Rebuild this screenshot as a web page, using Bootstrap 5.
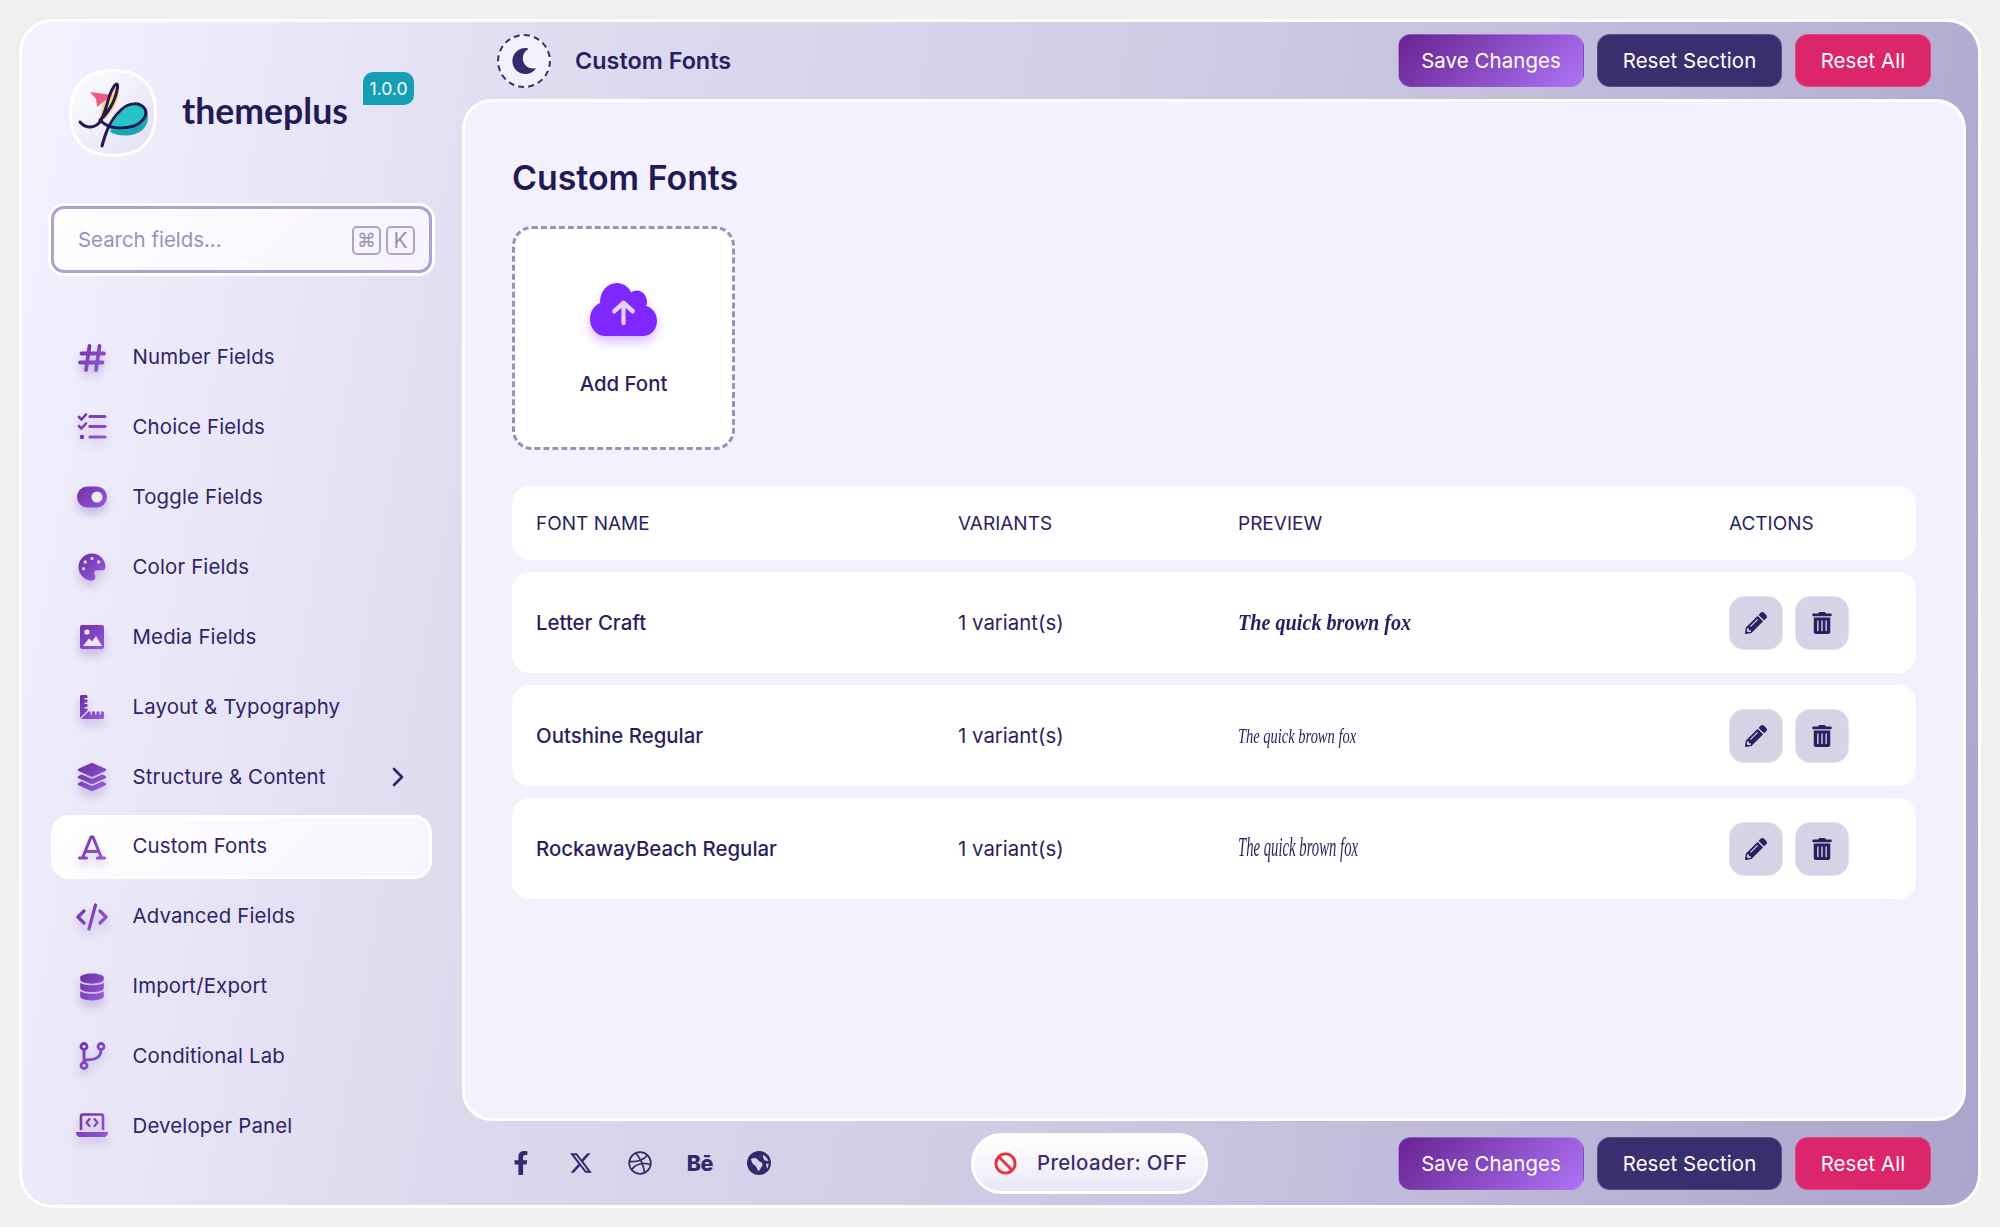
<!DOCTYPE html>
<html lang="en">
<head>
<meta charset="utf-8">
<title>themeplus - Custom Fonts</title>
<link href="https://cdn.jsdelivr.net/npm/bootstrap@5.3.0/dist/css/bootstrap.min.css" rel="stylesheet">
<style>
html,body{height:100%;}
body{background:#f0f0f0;font-family:Inter,"Liberation Sans",sans-serif;color:#2a1f5e;padding:19px;font-size:20.4px;overflow:hidden;}
.shell{width:1962px;height:1189px;border:3px solid #fff;border-radius:34px;background:linear-gradient(100deg,#f4f2ff 0%,#dfdcf0 25%,#cfcbe4 55%,#aba4cd 100%);overflow:hidden;}
.sidebar{width:440px;flex:none;}
.brand{padding:47px 0 0 47px;height:181px;}
.logo-box{width:88px;height:88px;flex:none;}
.brand-name{font-family:Lato,sans-serif;font-weight:700;font-size:35.6px;color:#231a56;margin-left:25px;line-height:83px;height:88px;}
.version{background:#159fb5;color:#fff;font-size:17.5px;line-height:33px;height:33px;width:51px;text-align:center;border-radius:10px 10px 10px 0;margin:3px 48px 0 auto;}
.search-outer{margin-left:26px;width:387px;height:73px;border-radius:16px;border:3px solid #fff;}
.search-inner{height:100%;border:3px solid #aba4cd;border-radius:13px;background:linear-gradient(135deg,#fff,#f5f3fe);padding:2px 14px 0 24px;}
.search-input{border:0;background:transparent;outline:0;flex:1;min-width:0;font-size:20.4px;color:#2a1f5e;font-family:Inter,sans-serif;padding:0;}
.search-input::placeholder{color:#9a90c0;opacity:1;}
.keycap{width:29px;height:29px;border:2px solid #aba4cd;border-radius:5px;color:#9a90c0;font-size:21px;line-height:1;margin-left:5px;}
.keycap-sym{font-family:"DejaVu Sans",sans-serif;font-size:19px;}
.side-nav{margin:49.5px 0 0 29px;width:381px;}
.nav-row{height:64px;margin-bottom:5.9px;padding-left:25px;padding-right:25px;border-radius:18px;border:3px solid transparent;color:#2f2468;text-decoration:none;font-weight:400;letter-spacing:.16px;}
.nav-row.is-on{background:linear-gradient(135deg,#fff,#f6f4fe);border-color:#fff;}
.nav-ic{width:32px;height:32px;margin-left:-3.5px;margin-right:25px;flex:none;filter:drop-shadow(0 6px 5px rgba(90,50,160,.28));}
.nav-ic svg{display:block;width:100%;height:100%;overflow:visible;}
.main-col{flex:1;min-width:0;padding-right:12px;}
.topbar{height:77px;padding:0 35px 0 35px;}
.moon-btn{width:54px;height:54px;border:2px dashed #3b2e6e;border-radius:50%;background:#f3f1fe;flex:none;}
.topbar-title{font-size:23.4px;font-weight:600;color:#2a1f5e;margin-left:24px;}
.act-btn{height:53px;border-radius:13px;border:1px solid rgba(255,255,255,.15);color:#fff;font-size:20.4px;font-weight:400;padding:2px 0 0;display:flex;align-items:center;justify-content:center;font-family:Inter,sans-serif;letter-spacing:.1px;}
.act-btn:hover{color:#fff;}
.act-save{width:186px;background:linear-gradient(135deg,#66228f,#ae74f6);}
.act-section{width:185px;background:#3a2e6e;}
.act-all{width:136px;background:#dc266c;}
.btn-set{gap:13px;margin-left:auto;}
.panel{height:1022px;border:3px solid #fff;border-radius:30px;background:#f3f1fe;padding:48px 47px;}
.panel-title{font-size:33.9px;font-weight:600;color:#221a55;margin:0 0 30px;line-height:46px;padding-top:5px;height:46px;}
.add-box{width:223px;height:224px;border:3px dashed #9a90c0;border-radius:20px;background:#fff;margin-bottom:36px;padding-top:54px;}
.add-box svg{width:67px;height:53px;margin-bottom:37.5px;filter:drop-shadow(0 6px 6px rgba(127,39,255,.3));}
.add-label{font-size:20.4px;font-weight:500;color:#2a1f5e;line-height:20px;}
.font-table{width:1404px;border-collapse:separate;border-spacing:0;table-layout:fixed;color:#2a1f5e;}
.font-table td,.font-table th{background:#fff;padding:0 0 0 24px;vertical-align:middle;}
.font-table th,.font-table td:not(:last-child){padding-top:2px;}
.font-table td:first-child,.font-table th:first-child{border-radius:18px 0 0 18px;}
.font-table td:last-child,.font-table th:last-child{border-radius:0 18px 18px 0;}
.font-table th{height:74px;font-weight:400;font-size:19px;}
.font-table td{height:101px;}
.gap-row td{height:12px!important;background:transparent!important;padding:0!important;border-radius:0!important;}
.name-cell{font-weight:500;}
.tool-btn{width:54px;height:54px;background:#d5d3e6;border:1px solid #e3e1ef;border-radius:15px;padding:0;color:#2a1f5e;}
.tool-btn svg{width:22px;height:22px;fill:#2a1f5e;}
.tool-gap{gap:11.5px;}
.pv{display:inline-block;transform-origin:left center;white-space:nowrap;font-family:"Liberation Serif",serif;font-style:italic;color:#2a1f5e;line-height:1;}
.pv-a{font-weight:700;font-size:23px;transform:scaleX(.877);}
.pv-b{font-size:22px;transform:scaleX(.658);font-weight:400;}
.pv-c{font-size:27px;transform:scaleX(.545);}
.botbar{height:84px;padding:0 35px 0 47px;}
.social{gap:35.6px;}
.soc-ic{width:24px;height:24px;color:#35296b;}
.soc-ic svg{display:block;width:100%;height:100%;}
.soc-be{font-weight:800;font-size:21.5px;line-height:24px;text-align:center;width:29px;margin:0 -2.5px;letter-spacing:-.5px;font-family:Inter,sans-serif;}
.preload{margin-left:auto;margin-right:190px;width:237px;height:61px;border:3px solid #fff;border-radius:31px;background:linear-gradient(180deg,#fff,#ebe8f8);padding-left:20px;color:#3b2e6e;}
.preload svg{width:23px;height:23px;margin-right:20px;flex:none;}
.preload span{letter-spacing:.35px;font-weight:500;}
.botbar .btn-set{margin-left:0;}
</style>
</head>
<body>
<svg width="0" height="0" style="position:absolute">
  <defs>
    <linearGradient id="gv" x1="0" y1="0" x2="1" y2="1"><stop offset="0" stop-color="#6b2ba0"/><stop offset="1" stop-color="#9a5fe0"/></linearGradient>
    <linearGradient id="gu" gradientUnits="userSpaceOnUse" x1="0" y1="0" x2="32" y2="32"><stop offset="0" stop-color="#6b2ba0"/><stop offset="1" stop-color="#9a5fe0"/></linearGradient>
    <linearGradient id="lg" x1="0" y1="0" x2="1" y2="1"><stop offset="0" stop-color="#ffffff"/><stop offset="1" stop-color="#e2ddf5"/></linearGradient>
  </defs>
</svg>
<div class="shell d-flex">
  <aside class="sidebar">
    <div class="brand d-flex align-items-start">
      <div class="logo-box">
        <svg viewBox="0 0 88 88" width="88" height="88">
          <path d="M44 1.5C72 1.5 86.5 16 86.5 44S72 86.5 44 86.5 1.5 72 1.5 44 16 1.5 44 1.5Z" fill="url(#lg)" stroke="#fff" stroke-width="3"/>
          <path d="M48 14C53 16 50 40 33 53C28 45 36 24 48 14Z" fill="#fbd67a"/>
          <path d="M21 23L43 26L28 38L27 30Z" fill="#ef5a86"/>
          <path d="M41 63C48 44 66 32 74 38C82 44 81 60 66 65C56 68 46 66 41 63Z" fill="#1aa5b3"/>
          <path d="M41 60C48 42 64 31 72 36C78 41 76 52 66 58C56 62 47 62 41 60Z" fill="#27c3c6"/>
          <path d="M11 53C16 59 24 60 30 54C38 44 38 28 44 19C47 14 50 13 48 21C46 33 38 45 32 50" fill="none" stroke="#211a55" stroke-width="3" stroke-linecap="round"/>
          <path d="M33 77C36 66 40 52 52 41C60 33 71 33 76 40C79 46 74 53 65 57C55 60 40 61 31 51" fill="none" stroke="#211a55" stroke-width="3" stroke-linecap="round"/>
        </svg>
      </div>
      <div class="brand-name">themeplus</div>
      <div class="version">1.0.0</div>
    </div>
    <div class="search-outer">
      <div class="search-inner d-flex align-items-center">
        <input class="search-input" type="text" placeholder="Search fields...">
        <span class="keycap keycap-sym d-flex align-items-center justify-content-center">⌘</span>
        <span class="keycap d-flex align-items-center justify-content-center">K</span>
      </div>
    </div>
    <nav class="side-nav">
      <a class="nav-row d-flex align-items-center" href="#"><span class="nav-ic"><svg viewBox="0 0 32 32"><path d="M13.5 4L10 28M23.5 4L20 28M5.5 11.5H28M4 20.5H26.5" fill="none" stroke="url(#gu)" stroke-width="3.8" stroke-linecap="round"/></svg></span>Number Fields</a>
      <a class="nav-row d-flex align-items-center" href="#"><span class="nav-ic"><svg viewBox="0 0 32 32"><path d="M3 6L5.5 8.5L10 3.5M3 15L5.5 17.5L10 12.5" fill="none" stroke="url(#gu)" stroke-width="2.6" stroke-linecap="round" stroke-linejoin="round"/><circle cx="6" cy="26" r="2.3" fill="#7b3bb8"/><path d="M14 5.5H29M14 15.5H29M14 26H29" fill="none" stroke="url(#gu)" stroke-width="3.2" stroke-linecap="round"/></svg></span>Choice Fields</a>
      <a class="nav-row d-flex align-items-center" href="#"><span class="nav-ic"><svg viewBox="0 0 32 32"><rect x="1" y="5.5" width="30" height="21" rx="10.5" fill="url(#gu)"/><circle cx="21" cy="16" r="5.5" fill="#f0edfb"/></svg></span>Toggle Fields</a>
      <a class="nav-row d-flex align-items-center" href="#"><span class="nav-ic"><svg viewBox="-48 -48 608 608"><path fill="url(#gv)" d="M512 256c0 .9 0 1.8 0 2.7c-.4 36.5-33.6 61.3-70.1 61.3H344c-26.5 0-48 21.5-48 48c0 3.4 .4 6.7 1 9.9c2.1 10.2 6.5 20 10.8 29.9c6.1 13.8 12.1 27.5 12.1 42c0 31.8-21.6 60.7-53.4 62c-3.5 .1-7 .2-10.6 .2C114.6 512 0 397.4 0 256S114.6 0 256 0S512 114.6 512 256zM128 288a32 32 0 1 0 -64 0 32 32 0 1 0 64 0zm0-96a32 32 0 1 0 0-64 32 32 0 1 0 0 64zM288 96a32 32 0 1 0 -64 0 32 32 0 1 0 64 0zm96 96a32 32 0 1 0 0-64 32 32 0 1 0 0 64z" fill-rule="evenodd"/></svg></span>Color Fields</a>
      <a class="nav-row d-flex align-items-center" href="#"><span class="nav-ic"><svg viewBox="0 0 32 32"><rect x="4" y="4" width="24" height="24" rx="2" fill="url(#gu)"/><circle cx="11" cy="11" r="2.6" fill="#ece8f8"/><path d="M7 25L13 17.5L16 20.5L20 15L26 25Z" fill="#ece8f8"/></svg></span>Media Fields</a>
      <a class="nav-row d-flex align-items-center" href="#"><span class="nav-ic"><svg viewBox="-85 -85 682 682"><path fill="url(#gv)" d="M160 288h-56c-4.42 0-8-3.58-8-8v-16c0-4.42 3.58-8 8-8h56v-64h-56c-4.42 0-8-3.58-8-8v-16c0-4.42 3.58-8 8-8h56V96h-56c-4.42 0-8-3.58-8-8V72c0-4.42 3.58-8 8-8h56V32c0-17.67-14.33-32-32-32H32C14.33 0 0 14.33 0 32v448c0 2.77.91 5.24 1.57 7.8L160 329.38V288zm320 64h-32v56c0 4.42-3.58 8-8 8h-16c-4.42 0-8-3.58-8-8v-56h-64v56c0 4.42-3.58 8-8 8h-16c-4.42 0-8-3.58-8-8v-56h-64v56c0 4.42-3.58 8-8 8h-16c-4.42 0-8-3.58-8-8v-56h-41.37L24.2 510.43c2.56.66 5.04 1.57 7.8 1.57h448c17.67 0 32-14.33 32-32v-96c0-17.67-14.33-32-32-32z"/></svg></span>Layout &amp; Typography</a>
      <a class="nav-row d-flex align-items-center" href="#"><span class="nav-ic"><svg viewBox="-32 -32 576 576"><path fill="url(#gv)" d="M12.41 148.02l232.94 105.67c6.8 3.09 14.49 3.09 21.29 0l232.94-105.67c16.55-7.51 16.55-32.52 0-40.03L266.65 2.31a25.607 25.607 0 0 0-21.29 0L12.41 107.98c-16.55 7.51-16.55 32.53 0 40.04zm487.18 88.28l-58.09-26.33-161.64 73.27c-7.56 3.43-15.59 5.17-23.86 5.17s-16.29-1.74-23.86-5.17L70.51 209.97l-58.1 26.33c-16.55 7.5-16.55 32.5 0 40l232.94 105.59c6.8 3.08 14.49 3.08 21.29 0L499.59 276.3c16.55-7.5 16.55-32.5 0-40zm0 127.8l-57.87-26.23-161.86 73.37c-7.56 3.43-15.59 5.17-23.86 5.17s-16.29-1.74-23.86-5.17L70.29 337.87 12.41 364.1c-16.55 7.5-16.55 32.5 0 40l232.94 105.59c6.8 3.08 14.49 3.08 21.29 0L499.59 404.1c16.55-7.5 16.55-32.5 0-40z"/></svg></span>Structure &amp; Content<svg class="ms-auto" width="12" height="20" viewBox="0 0 12 20"><path d="M2 2L10 10L2 18" fill="none" stroke="#2f2468" stroke-width="2.6" stroke-linecap="round" stroke-linejoin="round"/></svg></a>
      <a class="nav-row is-on d-flex align-items-center" href="#"><span class="nav-ic"><svg viewBox="0 0 32 32"><path d="M3.5 27H10.5M21.5 27H28.5M6.5 27L15 6H17L25.5 27M10 20.5H22" fill="none" stroke="url(#gu)" stroke-width="3" stroke-linecap="round" stroke-linejoin="round"/></svg></span>Custom Fonts</a>
      <a class="nav-row d-flex align-items-center" href="#"><span class="nav-ic"><svg viewBox="0 0 32 32"><path d="M8 10L2 16L8 22M24 10L30 16L24 22M19.5 4L13 28" fill="none" stroke="url(#gu)" stroke-width="3.2" stroke-linecap="round" stroke-linejoin="round"/></svg></span>Advanced Fields</a>
      <a class="nav-row d-flex align-items-center" href="#"><span class="nav-ic"><svg viewBox="-48 -48 544 608"><path fill="url(#gv)" d="M448 73.143v45.714C448 159.143 347.667 192 224 192S0 159.143 0 118.857V73.143C0 32.857 100.333 0 224 0s224 32.857 224 73.143zM448 176v102.857C448 319.143 347.667 352 224 352S0 319.143 0 278.857V176c48.125 33.143 136.208 48.572 224 48.572S399.874 209.143 448 176zm0 160v102.857C448 479.143 347.667 512 224 512S0 479.143 0 438.857V336c48.125 33.143 136.208 48.572 224 48.572S399.874 369.143 448 336z"/></svg></span>Import/Export</a>
      <a class="nav-row d-flex align-items-center" href="#"><span class="nav-ic"><svg viewBox="0 0 32 32"><g fill="none" stroke="url(#gu)" stroke-width="2.8" stroke-linecap="round"><circle cx="8" cy="6.5" r="3"/><circle cx="8" cy="25.5" r="3"/><circle cx="25" cy="6.5" r="3"/><path d="M8 9.5V22.5M8 20C18 20 25 19 25 9.5"/></g></svg></span>Conditional Lab</a>
      <a class="nav-row d-flex align-items-center" href="#"><span class="nav-ic"><svg viewBox="0 0 32 32"><path d="M5 20V6.5C5 5.5 5.8 4.5 7 4.5H25C26.2 4.5 27 5.5 27 6.5V20" fill="none" stroke="url(#gu)" stroke-width="2.6"/><path d="M13.5 9L10.5 12.5L13.5 16M18.5 9L21.5 12.5L18.5 16" fill="none" stroke="url(#gu)" stroke-width="2.2" stroke-linecap="round" stroke-linejoin="round"/><path d="M0 22H32C32 25.5 30 27 28 27H4C2 27 0 25.5 0 22Z" fill="url(#gu)"/></svg></span>Developer Panel</a>
    </nav>
  </aside>
  <div class="main-col d-flex flex-column">
    <header class="topbar d-flex align-items-center">
      <div class="moon-btn d-flex align-items-center justify-content-center"><svg width="26" height="26" viewBox="0 0 512 512"><path fill="#35296b" d="M283.211 512c78.962 0 151.079-35.925 198.857-94.792 7.068-8.708-.639-21.43-11.562-19.35-124.203 23.654-238.262-71.576-238.262-196.954 0-72.222 38.662-138.635 101.498-174.394 9.686-5.512 7.25-20.197-3.756-22.23A258.156 258.156 0 0 0 283.211 0c-141.309 0-256 114.511-256 256 0 141.309 114.511 256 256 256z"/></svg></div>
      <div class="topbar-title">Custom Fonts</div>
      <div class="btn-set d-flex">
        <button class="btn act-btn act-save" type="button">Save Changes</button>
        <button class="btn act-btn act-section" type="button">Reset Section</button>
        <button class="btn act-btn act-all" type="button">Reset All</button>
      </div>
    </header>
    <main class="panel">
      <h1 class="panel-title">Custom Fonts</h1>
      <div class="add-box d-flex flex-column align-items-center">
        <svg viewBox="0 32 640 448" preserveAspectRatio="none"><path fill="#7f27ff" d="M537.6 226.6c4.1-10.7 6.4-22.4 6.4-34.6 0-53-43-96-96-96-19.7 0-38.1 6-53.3 16.2C367 64.2 315.3 32 256 32c-88.4 0-160 71.6-160 160 0 2.7.1 5.4.2 8.1C40.2 219.8 0 273.2 0 336c0 79.5 64.5 144 144 144h368c70.7 0 128-57.3 128-128 0-61.9-44-113.6-102.4-125.4z"/><path d="M320 370V215M232 270L320 200L408 270" fill="none" stroke="#e5d2ff" stroke-width="40" stroke-linecap="round" stroke-linejoin="round"/></svg>
        <div class="add-label">Add Font</div>
      </div>
      <table class="font-table">
        <colgroup><col style="width:422px"><col style="width:280px"><col style="width:491px"><col style="width:211px"></colgroup>
        <thead><tr><th>FONT NAME</th><th>VARIANTS</th><th>PREVIEW</th><th>ACTIONS</th></tr></thead>
        <tbody>
          <tr class="gap-row"><td colspan="4"></td></tr>
          <tr><td class="name-cell">Letter Craft</td><td>1 variant(s)</td><td><span class="pv pv-a">The quick brown fox</span></td><td><div class="d-flex tool-gap">
            <button class="btn tool-btn d-flex align-items-center justify-content-center" type="button" aria-label="Edit"><svg viewBox="0 0 512 512"><path d="M497.9 142.1l-46.1 46.1c-4.7 4.7-12.3 4.7-17 0l-111-111c-4.7-4.7-4.7-12.3 0-17l46.1-46.1c18.7-18.7 49.1-18.7 67.9 0l60.1 60.1c18.8 18.7 18.8 49.1 0 67.9zM284.2 99.8L21.6 362.4.4 483.9c-2.9 16.4 11.4 30.6 27.8 27.8l121.5-21.3 262.6-262.6c4.7-4.7 4.7-12.3 0-17l-111-111c-4.8-4.7-12.4-4.7-17.1 0zM124.1 339.9c-5.5-5.5-5.5-14.3 0-19.8l154-154c5.5-5.5 14.3-5.5 19.8 0s5.5 14.3 0 19.8l-154 154c-5.5 5.5-14.3 5.5-19.8 0zM88 424h48v36.3l-64.5 11.3-31.1-31.1L51.7 376H88v48z"/></svg></button>
            <button class="btn tool-btn d-flex align-items-center justify-content-center" type="button" aria-label="Delete"><svg viewBox="0 0 448 512"><path d="M32 464a48 48 0 0 0 48 48h288a48 48 0 0 0 48-48V128H32zm272-256a16 16 0 0 1 32 0v224a16 16 0 0 1-32 0zm-96 0a16 16 0 0 1 32 0v224a16 16 0 0 1-32 0zm-96 0a16 16 0 0 1 32 0v224a16 16 0 0 1-32 0zM432 32H312l-9.4-18.7A24 24 0 0 0 281.1 0H166.8a23.72 23.72 0 0 0-21.4 13.3L136 32H16A16 16 0 0 0 0 48v32a16 16 0 0 0 16 16h416a16 16 0 0 0 16-16V48a16 16 0 0 0-16-16z"/></svg></button></div></td></tr>
          <tr class="gap-row"><td colspan="4"></td></tr>
          <tr><td class="name-cell">Outshine Regular</td><td>1 variant(s)</td><td><span class="pv pv-b">The quick brown fox</span></td><td><div class="d-flex tool-gap">
            <button class="btn tool-btn d-flex align-items-center justify-content-center" type="button" aria-label="Edit"><svg viewBox="0 0 512 512"><path d="M497.9 142.1l-46.1 46.1c-4.7 4.7-12.3 4.7-17 0l-111-111c-4.7-4.7-4.7-12.3 0-17l46.1-46.1c18.7-18.7 49.1-18.7 67.9 0l60.1 60.1c18.8 18.7 18.8 49.1 0 67.9zM284.2 99.8L21.6 362.4.4 483.9c-2.9 16.4 11.4 30.6 27.8 27.8l121.5-21.3 262.6-262.6c4.7-4.7 4.7-12.3 0-17l-111-111c-4.8-4.7-12.4-4.7-17.1 0zM124.1 339.9c-5.5-5.5-5.5-14.3 0-19.8l154-154c5.5-5.5 14.3-5.5 19.8 0s5.5 14.3 0 19.8l-154 154c-5.5 5.5-14.3 5.5-19.8 0zM88 424h48v36.3l-64.5 11.3-31.1-31.1L51.7 376H88v48z"/></svg></button>
            <button class="btn tool-btn d-flex align-items-center justify-content-center" type="button" aria-label="Delete"><svg viewBox="0 0 448 512"><path d="M32 464a48 48 0 0 0 48 48h288a48 48 0 0 0 48-48V128H32zm272-256a16 16 0 0 1 32 0v224a16 16 0 0 1-32 0zm-96 0a16 16 0 0 1 32 0v224a16 16 0 0 1-32 0zm-96 0a16 16 0 0 1 32 0v224a16 16 0 0 1-32 0zM432 32H312l-9.4-18.7A24 24 0 0 0 281.1 0H166.8a23.72 23.72 0 0 0-21.4 13.3L136 32H16A16 16 0 0 0 0 48v32a16 16 0 0 0 16 16h416a16 16 0 0 0 16-16V48a16 16 0 0 0-16-16z"/></svg></button></div></td></tr>
          <tr class="gap-row"><td colspan="4"></td></tr>
          <tr><td class="name-cell">RockawayBeach Regular</td><td>1 variant(s)</td><td><span class="pv pv-c">The quick brown fox</span></td><td><div class="d-flex tool-gap">
            <button class="btn tool-btn d-flex align-items-center justify-content-center" type="button" aria-label="Edit"><svg viewBox="0 0 512 512"><path d="M497.9 142.1l-46.1 46.1c-4.7 4.7-12.3 4.7-17 0l-111-111c-4.7-4.7-4.7-12.3 0-17l46.1-46.1c18.7-18.7 49.1-18.7 67.9 0l60.1 60.1c18.8 18.7 18.8 49.1 0 67.9zM284.2 99.8L21.6 362.4.4 483.9c-2.9 16.4 11.4 30.6 27.8 27.8l121.5-21.3 262.6-262.6c4.7-4.7 4.7-12.3 0-17l-111-111c-4.8-4.7-12.4-4.7-17.1 0zM124.1 339.9c-5.5-5.5-5.5-14.3 0-19.8l154-154c5.5-5.5 14.3-5.5 19.8 0s5.5 14.3 0 19.8l-154 154c-5.5 5.5-14.3 5.5-19.8 0zM88 424h48v36.3l-64.5 11.3-31.1-31.1L51.7 376H88v48z"/></svg></button>
            <button class="btn tool-btn d-flex align-items-center justify-content-center" type="button" aria-label="Delete"><svg viewBox="0 0 448 512"><path d="M32 464a48 48 0 0 0 48 48h288a48 48 0 0 0 48-48V128H32zm272-256a16 16 0 0 1 32 0v224a16 16 0 0 1-32 0zm-96 0a16 16 0 0 1 32 0v224a16 16 0 0 1-32 0zm-96 0a16 16 0 0 1 32 0v224a16 16 0 0 1-32 0zM432 32H312l-9.4-18.7A24 24 0 0 0 281.1 0H166.8a23.72 23.72 0 0 0-21.4 13.3L136 32H16A16 16 0 0 0 0 48v32a16 16 0 0 0 16 16h416a16 16 0 0 0 16-16V48a16 16 0 0 0-16-16z"/></svg></button></div></td></tr>
        </tbody>
      </table>
    </main>
    <footer class="botbar d-flex align-items-center">
      <div class="social d-flex align-items-center">
        <span class="soc-ic"><svg viewBox="0 0 320 512"><path fill="currentColor" d="M279.14 288l14.22-92.66h-88.91v-60.13c0-25.35 12.42-50.06 52.24-50.06h40.42V6.26S260.43 0 225.36 0c-73.22 0-121.08 44.38-121.08 124.72v70.62H22.89V288h81.39v224h100.17V288z"/></svg></span>
        <span class="soc-ic"><svg viewBox="0 0 512 512"><path fill="currentColor" d="M389.2 48h70.6L305.6 224.2 487.8 464H345.8L233 318.4 103.9 464H33.3l164.9-188.5L24 48h145.6l100.5 132.9L389.2 48zM364.4 421.8h39.1L151.1 88h-42L364.4 421.8z"/></svg></span>
        <span class="soc-ic"><svg viewBox="0 0 24 24"><g fill="none" stroke="currentColor" stroke-width="1.7"><circle cx="12" cy="12" r="10.8"/><path d="M8 2.2C12 7 15.5 14 16.6 21.8M1.6 10.5C8 11 15 9.5 19.5 4.2M3.5 19C7 13.5 14 11 22.8 13.5"/></g></svg></span>
        <span class="soc-ic soc-be">Bē</span>
        <span class="soc-ic"><svg viewBox="0 0 24 24"><circle cx="12" cy="12" r="12" fill="currentColor"/><path d="M4 8C7 6 10 7 11 9C12 11 14 10.5 15 12C16 14 15.5 15 14 16.5C13 19 11.5 20.5 11 20C10 17 9.5 16 8 14.5C6 13.5 4.5 11.5 4 8ZM16 4C18 5 20.5 7 21.5 10L18 9.5C16.5 8 15.5 6 16 4ZM19 13L21.5 12.5C21.5 15 21 16.5 20 17.5Z" fill="#d6d2e8"/></svg></span>
      </div>
      <div class="preload d-flex align-items-center">
        <svg viewBox="0 0 24 24"><circle cx="12" cy="12" r="10" fill="none" stroke="#e8323c" stroke-width="3"/><path d="M5 5L19 19" stroke="#e8323c" stroke-width="3"/></svg>
        <span>Preloader: OFF</span>
      </div>
      <div class="btn-set d-flex">
        <button class="btn act-btn act-save" type="button">Save Changes</button>
        <button class="btn act-btn act-section" type="button">Reset Section</button>
        <button class="btn act-btn act-all" type="button">Reset All</button>
      </div>
    </footer>
  </div>
</div>
<script src="https://cdn.jsdelivr.net/npm/bootstrap@5.3.0/dist/js/bootstrap.bundle.min.js"></script>
</body>
</html>
